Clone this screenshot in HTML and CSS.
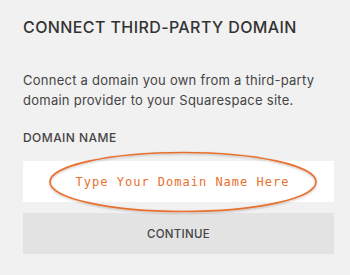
FILE: index.html
```html
<!DOCTYPE html>
<html>
<head>
<meta charset="utf-8">
<link rel="stylesheet" href="styles.css">
</head>
<body>
<div class="panel">
  <h1 class="title">CONNECT THIRD-PARTY DOMAIN</h1>
  <p class="desc">Connect a domain you own from a third-party domain provider to your Squarespace site.</p>
  <div class="label">DOMAIN NAME</div>
  <div class="field">
    <span class="hint">Type Your Domain Name Here</span>
    <svg class="ring" width="274" height="66" viewBox="0 0 274 66">
      <defs>
        <filter id="sh" x="-10%" y="-20%" width="120%" height="140%">
          <feGaussianBlur in="SourceAlpha" stdDeviation="1"/>
          <feOffset dx="0" dy="1" result="b"/>
          <feFlood flood-color="#000" flood-opacity="0.25"/>
          <feComposite in2="b" operator="in"/>
          <feMerge><feMergeNode/><feMergeNode in="SourceGraphic"/></feMerge>
        </filter>
      </defs>
      <ellipse cx="137" cy="32" rx="133" ry="29.5" fill="none" stroke="#e8702e" stroke-width="1.6" filter="url(#sh)"/>
    </svg>
  </div>
  <div class="button">CONTINUE</div>
</div>
</body>
</html>
```
FILE: styles.css
```css
html, body {
  margin: 0;
  padding: 0;
  background: #f1f1f1;
}
.panel {
  width: 311px;
  padding: 17px 0 0 23px;
  font-family: Inter, "Open Sans", sans-serif;
  color: #3a3a3a;
}
.title {
  margin: 0;
  font-size: 16px;
  font-weight: 500;
  line-height: 20px;
  letter-spacing: 0.4px;
  color: #333;
}
.desc {
  margin: 33px 0 0 0;
  font-size: 13px;
  line-height: 20px;
  letter-spacing: 0.25px;
  color: #444;
}
.label {
  margin-top: 20px;
  font-size: 12px;
  font-weight: 500;
  line-height: 16px;
  letter-spacing: 0.45px;
  color: #444;
}
.field {
  position: relative;
  margin-top: 15px;
  height: 41px;
  background: #fff;
  display: flex;
  align-items: center;
  justify-content: center;
}
.hint {
  font-family: "DejaVu Sans Mono", "Liberation Mono", monospace;
  font-size: 12px;
  letter-spacing: 1px;
  color: #e8702e;
  padding-left: 8px;
}
.ring {
  position: absolute;
  left: 23px;
  top: -11px;
}
.button {
  margin-top: 11px;
  height: 41px;
  background: #e3e3e3;
  display: flex;
  align-items: center;
  justify-content: center;
  font-size: 11.5px;
  font-weight: 500;
  color: #444;
  letter-spacing: 0.3px;
}
```
